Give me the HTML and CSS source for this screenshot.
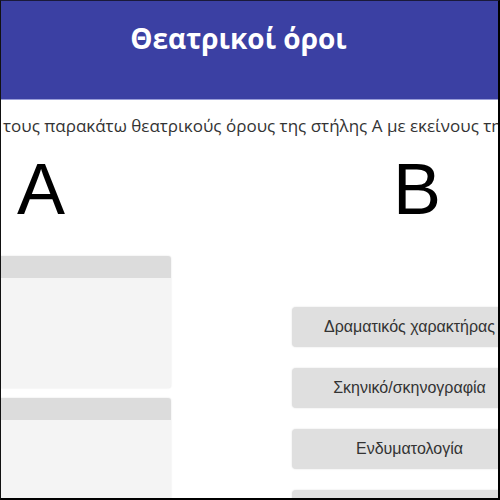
FILE: index.html
```html
<!DOCTYPE html>
<html lang="el">
<head>
<meta charset="utf-8">
<title>Θεατρικοί όροι</title>
<link rel="stylesheet" href="styles.css">
</head>
<body>
<div class="frame">
  <header class="topbar">
    <h1 class="title">Θεατρικοί όροι</h1>
  </header>
  <p class="instructions">τους παρακάτω θεατρικούς όρους της στήλης Α με εκείνους της στήλης Β</p>
  <div class="columns">
    <section class="col col-a">
      <div class="letter">A</div>
      <div class="cards">
        <div class="card"><div class="card-head"></div><div class="card-body"></div></div>
        <div class="card"><div class="card-head"></div><div class="card-body"></div></div>
      </div>
    </section>
    <section class="col col-b">
      <div class="letter">B</div>
      <div class="buttons">
        <button class="term">Δραματικός χαρακτήρας</button>
        <button class="term">Σκηνικό/σκηνογραφία</button>
        <button class="term">Ενδυματολογία</button>
        <button class="term">Φωτισμός</button>
      </div>
    </section>
  </div>
</div>
</body>
</html>
```
FILE: styles.css
```css
html, body {
  margin: 0;
  padding: 0;
  background: #ffffff;
}
.frame {
  box-sizing: border-box;
  width: 500px;
  height: 500px;
  overflow: hidden;
  border-top: 1px solid #1a1a3a;
  border-left: 1px solid #111111;
  border-right: 2px solid #000000;
  border-bottom: 2px solid #000000;
  background: #ffffff;
}
.topbar {
  box-sizing: border-box;
  height: 99px;
  background: #3b40a3;
  border-bottom: 1px solid #9a9ed8;
  padding: 19px 22px 0 0;
  text-align: center;
}
.title {
  margin: 0;
  font-family: "Open Sans", "Noto Sans", sans-serif;
  font-weight: 700;
  font-size: 28px;
  line-height: 37px;
  color: #ffffff;
}
.instructions {
  margin: 15px 0 0 0;
  padding-left: 2px;
  white-space: nowrap;
  font-family: "Open Sans", "Noto Sans", sans-serif;
  font-size: 17px;
  line-height: 21px;
  color: #333333;
}
.columns {
  display: flex;
  align-items: flex-start;
  gap: 121px;
  margin-left: -90px;
  margin-top: 17px;
}
.col {
  flex: none;
  display: flex;
  flex-direction: column;
}
.col-a { width: 260px; }
.col-b { width: 250px; }
.letter {
  font-family: "Liberation Sans", Arial, sans-serif;
  font-size: 72px;
  line-height: 72px;
  color: #000000;
  text-align: center;
}
.cards {
  display: flex;
  flex-direction: column;
  gap: 10px;
  margin-top: 31px;
}
.card {
  border-radius: 3px;
  overflow: hidden;
  background: #f4f4f4;
  box-shadow: 0 0 2px rgba(0,0,0,0.12);
}
.card-head {
  height: 22px;
  background: #dcdcdc;
}
.card-body {
  height: 110px;
}
.buttons {
  display: flex;
  flex-direction: column;
  gap: 21px;
  margin-top: 82px;
  width: 235px;
}
.term {
  box-sizing: border-box;
  height: 40px;
  border: none;
  border-radius: 4px;
  background: #dfdfdf;
  box-shadow: 0 0 2px rgba(0,0,0,0.12);
  font-family: "Liberation Sans", Arial, sans-serif;
  font-size: 16px;
  color: #333333;
  padding: 0;
  text-align: center;
}
```
